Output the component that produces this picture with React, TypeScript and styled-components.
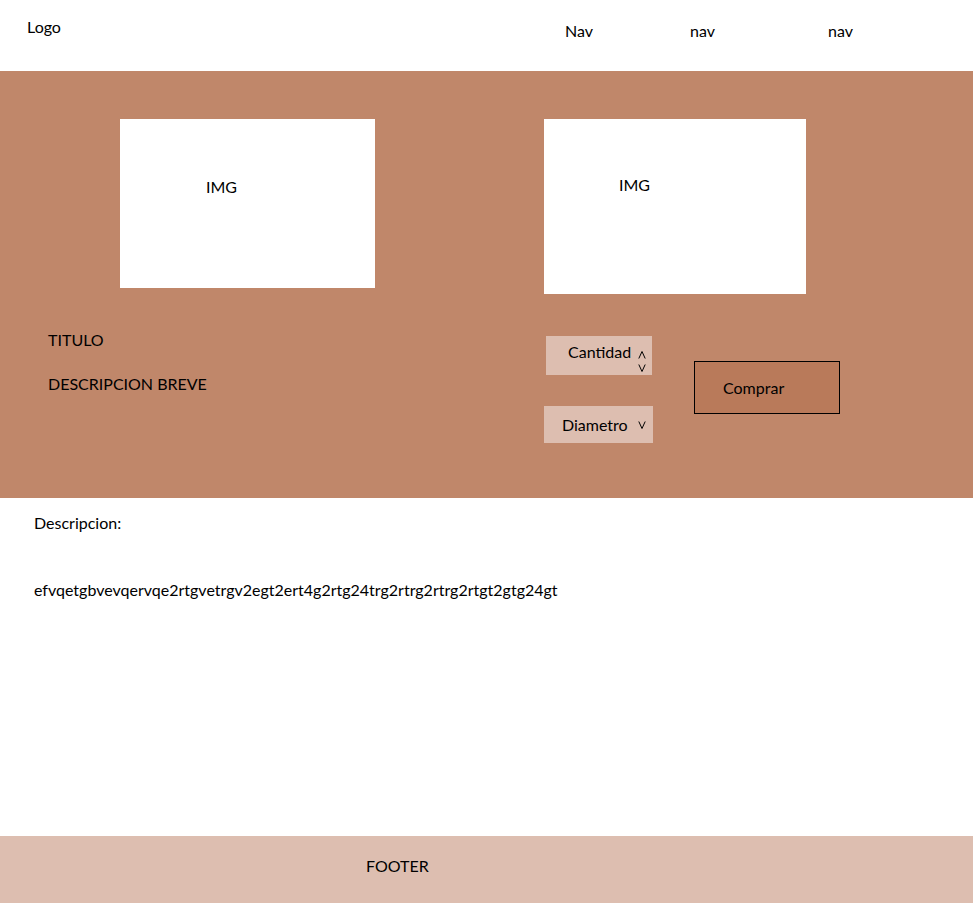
import styled, { createGlobalStyle } from "styled-components";

const GlobalStyle = createGlobalStyle`
  * {
    box-sizing: border-box;
  }

  body {
    margin: 0;
    font-family: Lato, "Open Sans", sans-serif;
    font-size: 16px;
    line-height: 20px;
    color: #000;
    background: #fff;
  }
`;

const Page = styled.div`
  display: flex;
  flex-direction: column;
  min-height: 100vh;
`;

const HeaderStyle = styled.header`
  display: flex;
  align-items: flex-start;
  height: 71px;
  padding: 17px 0 0 27px;
`;

const LogoStyle = styled.a`
  color: #000;
  text-decoration: none;
`;

const NavStyle = styled.nav`
  display: flex;
  margin: 4px 0 0 auto;
  padding-right: 120px;
`;

const NavLink = styled.a<{ $gap: number }>`
  margin-left: ${({ $gap }) => $gap}px;
  color: #000;
  text-decoration: none;
`;

const HeroStyle = styled.section`
  display: flex;
  flex-direction: column;
  height: 427px;
  padding-top: 48px;
  background: #c0876a;
`;

const ImageRow = styled.div`
  display: flex;
  align-items: flex-start;
`;

const ImageBox = styled.div<{ $w: number; $h: number; $x: number; $y: number; $left: number }>`
  width: ${({ $w }) => $w}px;
  height: ${({ $h }) => $h}px;
  margin-left: ${({ $left }) => $left}px;
  padding: ${({ $y }) => $y}px 0 0 ${({ $x }) => $x}px;
  background: #fff;
`;

const InfoRow = styled.div`
  display: flex;
  align-items: flex-start;
`;

const InfoText = styled.div`
  display: flex;
  flex-direction: column;
  gap: 24px;
  width: 544px;
  padding: 36px 0 0 48px;
`;

const BuyArea = styled.div`
  display: flex;
  align-items: center;
  gap: 41px;
  margin-top: 42px;
`;

const Controls = styled.div`
  display: flex;
  flex-direction: column;
  align-items: flex-start;
  gap: 31px;
`;

const SelectBox = styled.div<{ $w: number; $h: number; $pl: number; $pt: number; $ml?: number }>`
  display: flex;
  align-items: flex-start;
  width: ${({ $w }) => $w}px;
  height: ${({ $h }) => $h}px;
  margin-left: ${({ $ml }) => $ml ?? 0}px;
  padding: ${({ $pt }) => $pt}px 0 0 ${({ $pl }) => $pl}px;
  background: #ddbeb0;
`;

const Spinner = styled.div<{ $ml: number; $mt: number; $gap: number }>`
  display: flex;
  flex-direction: column;
  gap: ${({ $gap }) => $gap}px;
  margin: ${({ $mt }) => $mt}px 0 0 ${({ $ml }) => $ml}px;

  svg {
    display: block;
  }
`;

const BuyButton = styled.button`
  width: 146px;
  height: 53px;
  margin-top: -4px;
  padding: 0 0 0 28px;
  border: 1px solid #000;
  background: #b97a5a;
  font: inherit;
  color: #000;
  text-align: left;
  cursor: pointer;
`;

const DescriptionStyle = styled.section`
  flex: 1;
  padding: 15px 34px 0;

  p {
    margin: 0;
  }

  p + p {
    margin-top: 47px;
  }
`;

const FooterStyle = styled.footer`
  height: 67px;
  padding: 20px 0 0 366px;
  background: #ddbeb0;
`;

const Chevron = ({ up }: { up?: boolean }) => (
  <svg width="8" height="8" viewBox="0 0 8 8">
    <polyline
      points={up ? "0.8,7.5 4,0.5 7.2,7.5" : "0.8,0.5 4,7.5 7.2,0.5"}
      fill="none"
      stroke="#000"
      strokeWidth="1"
    />
  </svg>
);

const App = () => {
  return (
    <>
      <GlobalStyle />
      <Page>
        <HeaderStyle>
          <LogoStyle href="/">Logo</LogoStyle>
          <NavStyle>
            <NavLink $gap={0} href="/">Nav</NavLink>
            <NavLink $gap={97} href="/">nav</NavLink>
            <NavLink $gap={113} href="/">nav</NavLink>
          </NavStyle>
        </HeaderStyle>

        <HeroStyle>
          <ImageRow>
            <ImageBox $w={255} $h={169} $left={120} $x={86} $y={58}>IMG</ImageBox>
            <ImageBox $w={262} $h={175} $left={169} $x={75} $y={56}>IMG</ImageBox>
          </ImageRow>

          <InfoRow>
            <InfoText>
              <span>TITULO</span>
              <span>DESCRIPCION BREVE</span>
            </InfoText>

            <BuyArea>
              <Controls>
                <SelectBox $w={106} $h={39} $ml={2} $pl={22} $pt={6}>
                  Cantidad
                  <Spinner $ml={7} $mt={9} $gap={5}>
                    <Chevron up />
                    <Chevron />
                  </Spinner>
                </SelectBox>
                <SelectBox $w={109} $h={37} $pl={18} $pt={9}>
                  Diametro
                  <Spinner $ml={10} $mt={6} $gap={0}>
                    <Chevron />
                  </Spinner>
                </SelectBox>
              </Controls>
              <BuyButton>Comprar</BuyButton>
            </BuyArea>
          </InfoRow>
        </HeroStyle>

        <DescriptionStyle>
          <p>Descripcion:</p>
          <p>efvqetgbvevqervqe2rtgvetrgv2egt2ert4g2rtg24trg2rtrg2rtrg2rtgt2gtg24gt</p>
        </DescriptionStyle>

        <FooterStyle>FOOTER</FooterStyle>
      </Page>
    </>
  );
};

export default App;
